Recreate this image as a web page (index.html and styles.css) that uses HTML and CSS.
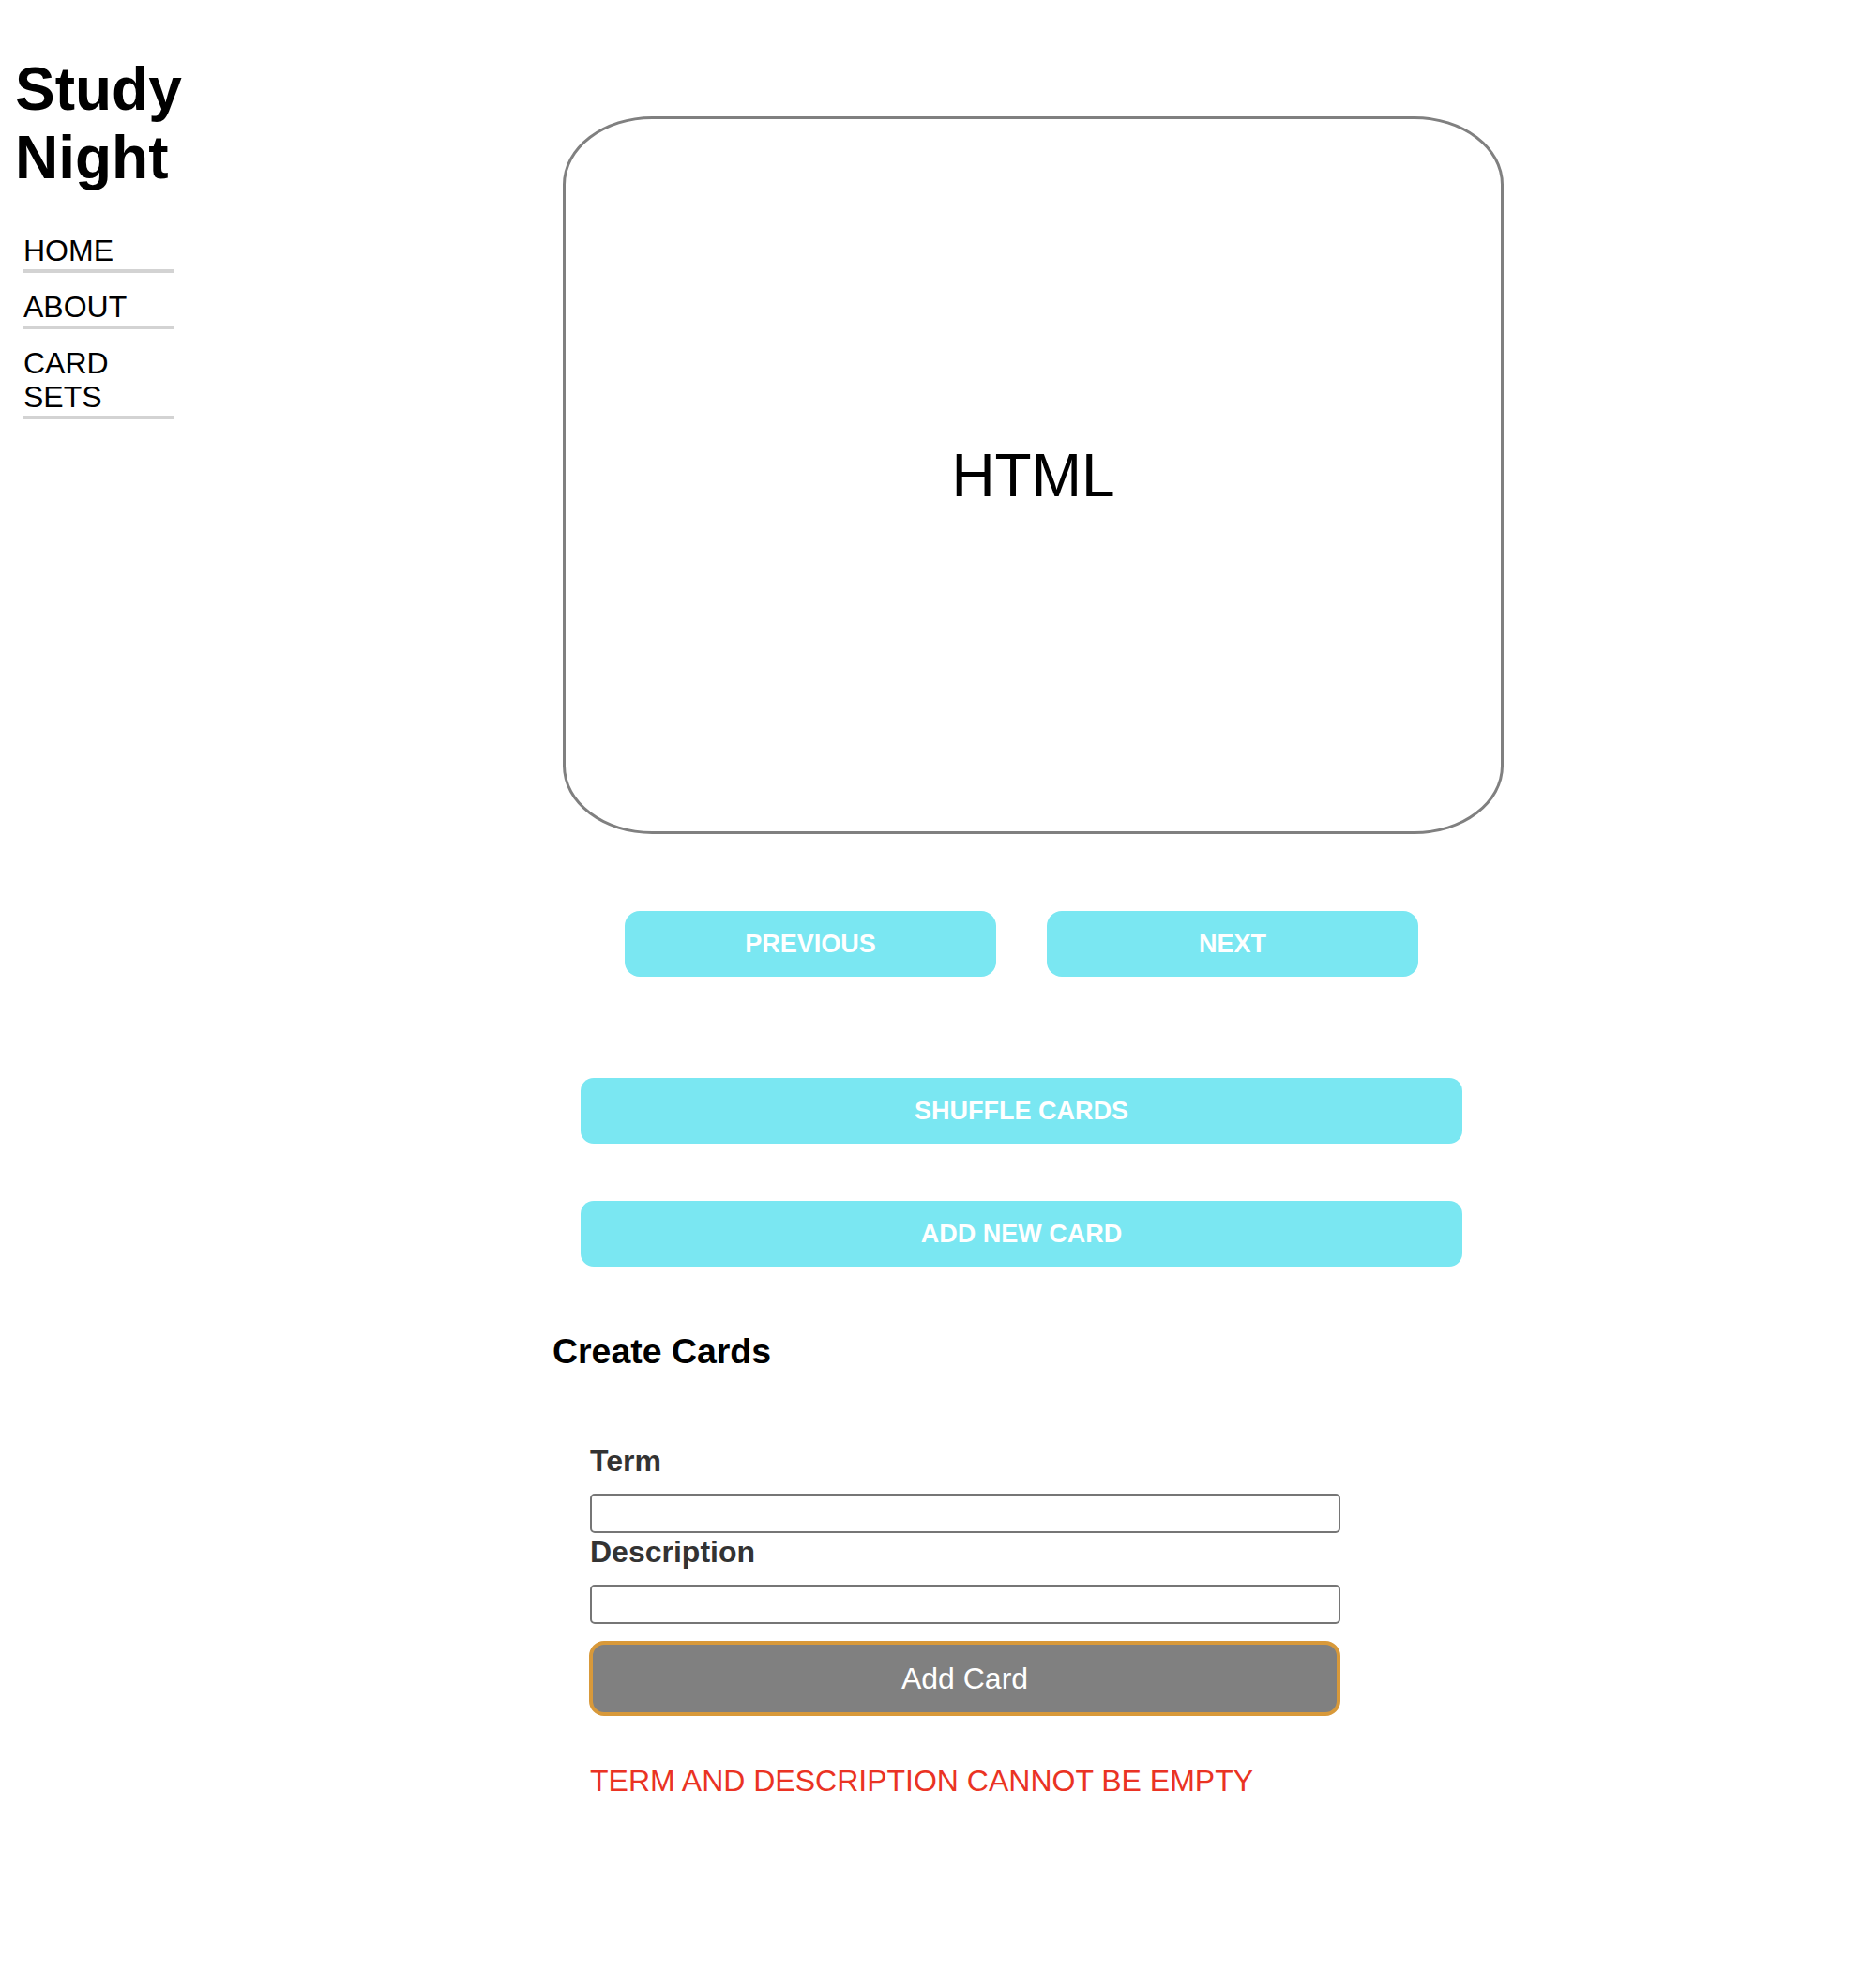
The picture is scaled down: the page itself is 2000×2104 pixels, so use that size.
FILE: index.html
```html
<!DOCTYPE html>
<html lang="en">
<head>
<meta charset="utf-8">
<title>Study Night</title>
<link rel="stylesheet" href="styles.css">
</head>
<body>
<div class="layout">
  <aside class="sidebar">
    <h1 class="brand">Study Night</h1>
    <ul class="nav">
      <li>HOME</li>
      <li>ABOUT</li>
      <li>CARD SETS</li>
    </ul>
  </aside>
  <main class="main">
    <div class="main-inner">
      <div class="card"><span class="card-text">HTML</span></div>
      <div class="nav-row">
        <button class="btn btn-nav">PREVIOUS</button>
        <button class="btn btn-nav">NEXT</button>
      </div>
      <button class="btn btn-wide btn-shuffle">SHUFFLE CARDS</button>
      <button class="btn btn-wide btn-add-new">ADD NEW CARD</button>
      <h3 class="create-title">Create Cards</h3>
      <form class="create-form">
        <label class="field-label label-term">Term</label>
        <input class="field-input" type="text">
        <label class="field-label label-desc">Description</label>
        <input class="field-input" type="text">
        <button type="button" class="add-card">Add Card</button>
        <p class="error">TERM AND DESCRIPTION CANNOT BE EMPTY</p>
      </form>
    </div>
  </main>
</div>
</body>
</html>
```

FILE: styles.css
```css
html, body {
  background: #ffffff;
}
body {
  margin: 16px;
  font-family: "Liberation Sans", Arial, Helvetica, sans-serif;
  color: #000000;
}
.layout {
  display: flex;
  align-items: flex-start;
}
.sidebar {
  width: 178px;
  flex: none;
}
.brand {
  font-size: 64px;
  font-weight: bold;
  line-height: 73.6px;
  margin: 42.88px 0;
}
.nav {
  list-style: none;
  margin: 0;
  padding: 0 0 0 9px;
}
.nav li {
  width: 160px;
  font-size: 32px;
  line-height: 36.8px;
  padding-bottom: 1px;
  border-bottom: 4px solid #d3d3d3;
  margin-bottom: 18px;
}
.main {
  flex: 1;
  min-width: 0;
}
.main-inner {
  width: 1000px;
  margin: 0 auto;
  display: flex;
  flex-direction: column;
}
.card {
  box-sizing: border-box;
  width: 1003px;
  height: 765px;
  margin: 108px 0 0 11px;
  border: 3px solid #808080;
  border-radius: 9.5%;
  display: flex;
  align-items: center;
  justify-content: center;
}
.card-text {
  font-size: 64px;
  line-height: 1;
}
.btn {
  border: none;
  background: #7ae7f2;
  color: #ffffff;
  font-family: "Liberation Sans", Arial, Helvetica, sans-serif;
  font-weight: bold;
  font-size: 27px;
  height: 70px;
  border-radius: 16px;
  padding: 0;
}
.nav-row {
  display: flex;
  justify-content: center;
  gap: 54px;
  margin-top: 82px;
}
.btn-nav {
  width: 396px;
}
.btn-wide {
  width: 940px;
  align-self: center;
  border-radius: 14px;
}
.btn-shuffle {
  margin-top: 108px;
}
.btn-add-new {
  margin-top: 61px;
}
.create-title {
  font-size: 37.44px;
  font-weight: bold;
  line-height: 43px;
  margin: 69px 0 0 0;
}
.create-form {
  display: flex;
  flex-direction: column;
  align-items: flex-start;
  padding-left: 40px;
  margin-top: 77px;
}
.field-label {
  display: block;
  font-size: 32px;
  font-weight: bold;
  line-height: 36.8px;
  color: #333333;
  margin-bottom: 16.7px;
}
.label-desc {
  margin-top: 1.5px;
}
.field-input {
  box-sizing: border-box;
  width: 800px;
  height: 42px;
  margin: 0;
  border: 2px solid #767676;
  border-radius: 5px;
  background: #ffffff;
}
.add-card {
  box-sizing: border-box;
  width: 801px;
  height: 80px;
  margin: 18px 0 0 -1px;
  border: 4px solid #d8993a;
  border-radius: 16px;
  background: #808080;
  color: #ffffff;
  font-family: "Liberation Sans", Arial, Helvetica, sans-serif;
  font-size: 32px;
  padding: 0;
}
.error {
  margin: 50.5px 0 0 0;
  font-size: 32px;
  line-height: 36.8px;
  color: #ea3323;
}
```
